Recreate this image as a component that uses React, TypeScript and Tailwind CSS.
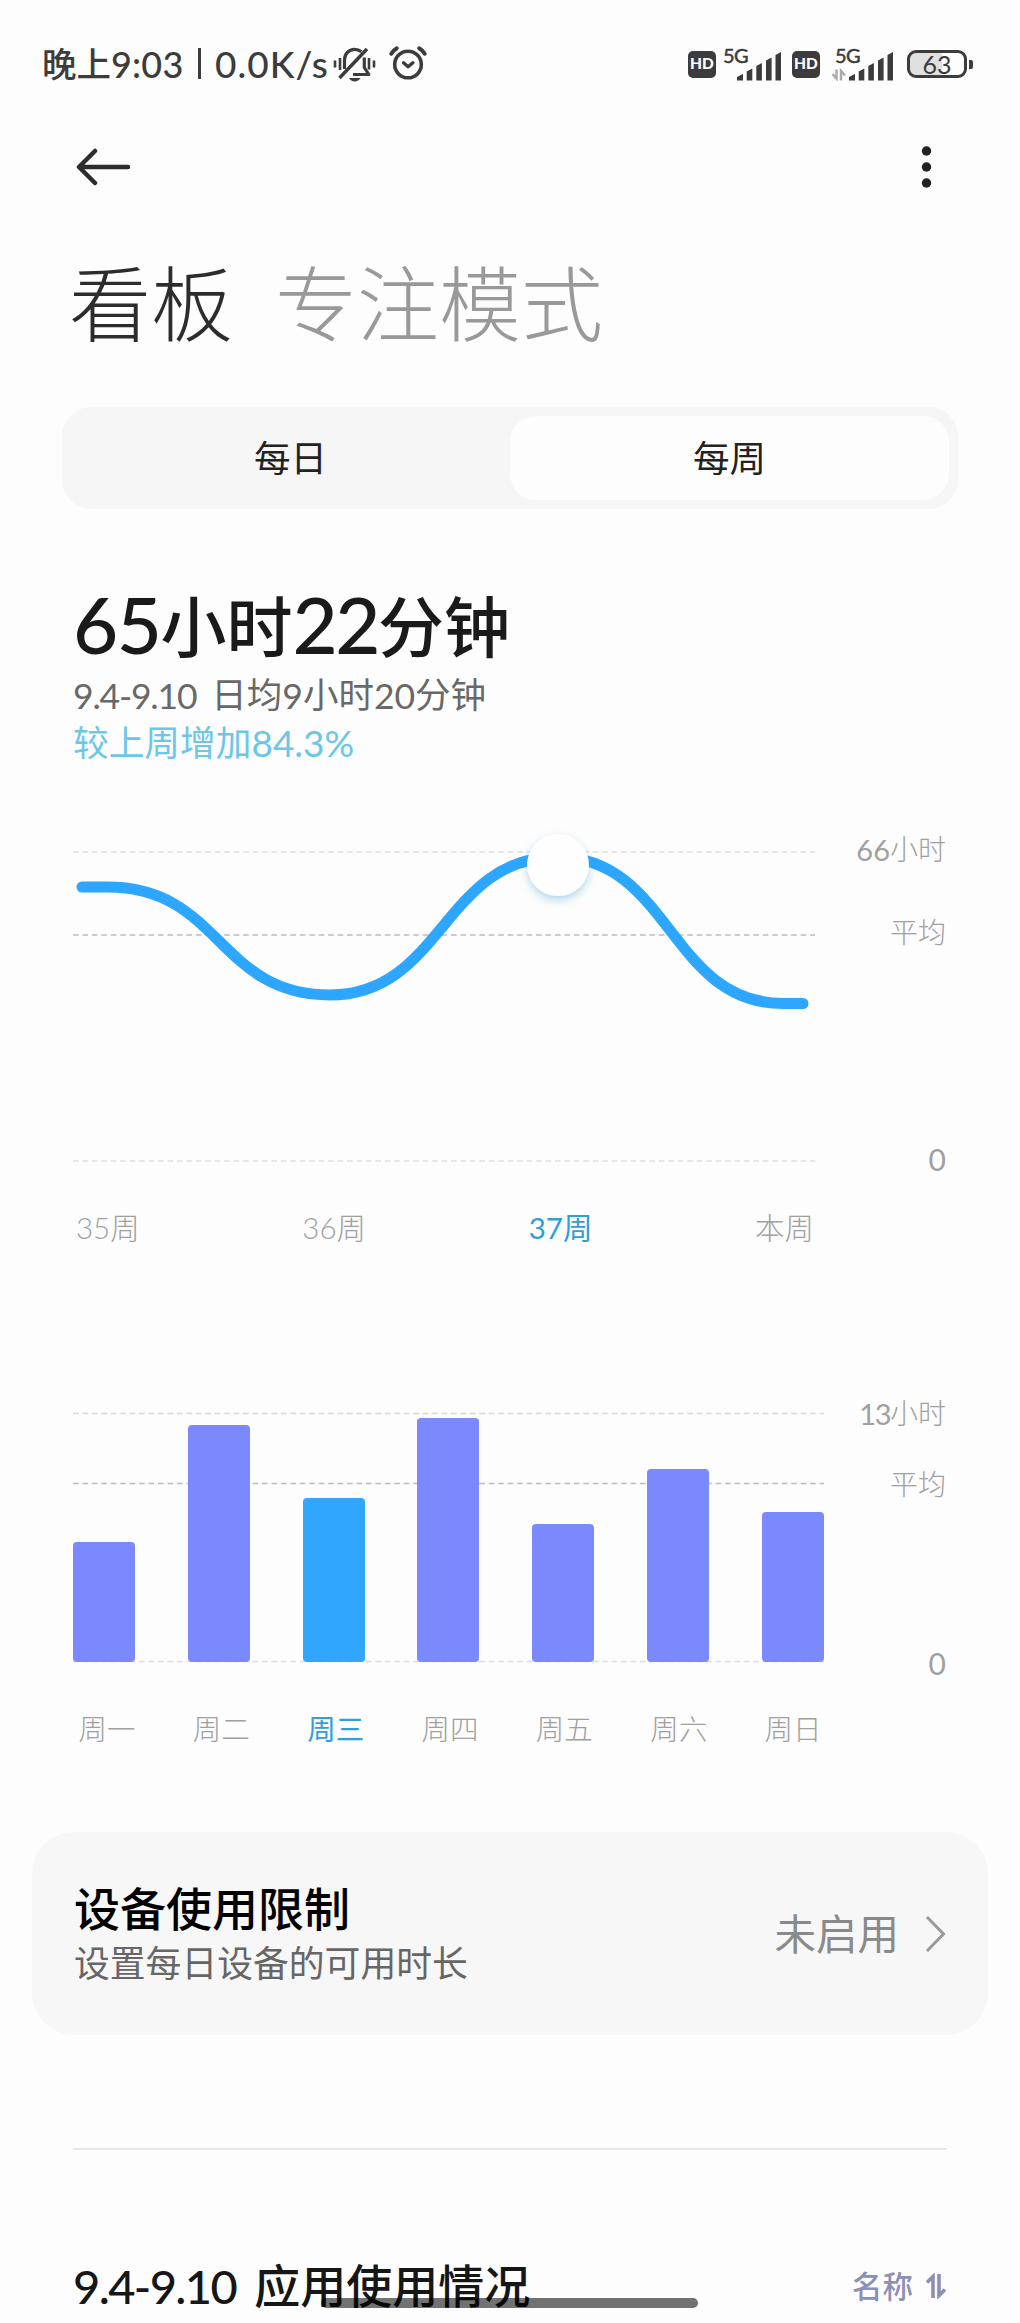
import { ReactNode } from 'react';

const WEEKS = [
  { label: '35周', active: false },
  { label: '36周', active: false },
  { label: '37周', active: true },
  { label: '本周', active: false },
];

const DAYS = [
  { label: '周一', height: 120, active: false },
  { label: '周二', height: 237, active: false },
  { label: '周三', height: 164, active: true },
  { label: '周四', height: 244, active: false },
  { label: '周五', height: 138, active: false },
  { label: '周六', height: 193, active: false },
  { label: '周日', height: 150, active: false },
];

function Num({ children, className = '' }: { children: ReactNode; className?: string }) {
  return <span className={`align-[-0.03em] ${className}`}>{children}</span>;
}

function GridLine({ y, width, color }: { y: number; width: number; color: string }) {
  return (
    <line x1="0" x2={width} y1={y} y2={y} stroke={color} strokeWidth="1.6" strokeDasharray="5.6 3.85" />
  );
}

function MutedBellIcon() {
  return (
    <svg width="44" height="38" viewBox="0 0 44 38" fill="none" stroke="#3c3c3c" strokeWidth="3.200">
      <path d="M11.500 24V15C11.500 9 15.800 4.300 21.500 4.300c2.800 0 5 .9 6.800 2.500" />
      <path d="M31.300 12.500V22.500l4.500 7H20" strokeLinejoin="round" />
      <path d="M34 4 6.500 33" strokeWidth="3.400" />
      <path d="M16 33h11.500c-1.300 2.300-3.300 3.400-5.800 3.400s-4.500-1.100-5.700-3.400Z" fill="#3c3c3c" stroke="none" />
      <path d="M2 15.500v7M7 13v12M36 13v11.500M41 15.500v7" strokeWidth="2.600" />
    </svg>
  );
}

function AlarmIcon() {
  return (
    <svg
      width="40"
      height="36"
      viewBox="0 0 40 36"
      fill="none"
      stroke="#3c3c3c"
      strokeLinecap="round"
      strokeLinejoin="round"
    >
      <circle cx="20" cy="19.500" r="13.300" strokeWidth="3.600" />
      <path d="m15.500 17.800 4.600 4 4.800-4" strokeWidth="3.400" />
      <path d="M3.300 8.700c1.400-2.300 3-3.900 5.500-5.400M36.700 8.700c-1.400-2.300-3-3.900-5.500-5.400" strokeWidth="4" />
    </svg>
  );
}

function HdBadge() {
  return (
    <span className="flex h-[27px] w-7 items-center justify-center rounded-[5px] bg-[#3c3c3c] text-[15.500px] font-black text-white">
      HD
    </span>
  );
}

function Signal({ data = false }: { data?: boolean }) {
  return (
    <svg width="61" height="36" viewBox="0 -2 61 36" fill="#3c3c3c" className="overflow-visible">
      <text x="0" y="15" fontSize="20" letterSpacing="-0.700" stroke="#3c3c3c" strokeWidth="0.500">
        5G
      </text>
      <path d="M14 29 20 26V32.500H14ZM23.700 23.500 29.300 20.500V32.500H23.700ZM33.300 18 38.900 15V32.500H33.300ZM43 12.500 48.600 9.500V32.500H43ZM52.500 7 58 4V32.500H52.500Z" />
      {data && (
        <path d="M1.500 21.500v9l-4-4.500M6 32.500v-9.500l4 4.500" fill="none" stroke="#aaa" strokeWidth="2.400" />
      )}
    </svg>
  );
}

function StatusBar() {
  return (
    <div className="flex h-[128px] items-center pl-[42px] pr-[47px] text-[34.500px] text-[#3c3c3c]">
      <div className="flex items-center whitespace-nowrap font-medium leading-[40px]">
        <span>
          晚上<Num className="text-[36px] tracking-[0.200px]">9:03</Num>
        </span>
        <span className="ml-[14px] mr-[14px] h-[31px] w-[3.500px] bg-[#3c3c3c]" />
        <Num className="w-[118px] text-[37px] tracking-[1px]">0.0K/s</Num>
      </div>
      <MutedBellIcon />
      <div className="ml-[11px] mt-[-2px]">
        <AlarmIcon />
      </div>
      <div className="ml-auto flex items-center">
        <HdBadge />
        <div className="ml-[7px]">
          <Signal />
        </div>
        <div className="ml-[8px]">
          <HdBadge />
        </div>
        <div className="ml-[15px]">
          <Signal data />
        </div>
        <div className="ml-[11px] flex h-[28px] w-[60px] items-center justify-center rounded-[9px] border-[3px] border-[#3c3c3c] bg-[linear-gradient(90deg,#e0e0e0_60%,#fdfdfd_60%)] text-[25px] leading-none">
          63
        </div>
        <span className="ml-[2px] h-[9px] w-[4px] rounded-r-[2px] bg-[#3c3c3c]" />
      </div>
    </div>
  );
}

function Header() {
  return (
    <>
      <div className="flex h-[78px] items-center justify-between pl-[76px] pr-[88px]">
        <svg
          width="55"
          height="38"
          viewBox="0 0 55 38"
          fill="none"
          stroke="#2c2c2c"
          strokeWidth="4.500"
          strokeLinecap="round"
          strokeLinejoin="round"
        >
          <path d="M19 3 3 19l16 16M4 19h48" />
        </svg>
        <svg width="11" height="44" viewBox="0 0 11 44" fill="#222">
          <circle cx="5.500" cy="6" r="4.700" />
          <circle cx="5.500" cy="22" r="4.700" />
          <circle cx="5.500" cy="38" r="4.700" />
        </svg>
      </div>
      <div className="mt-[47px] flex h-[101px] gap-[42px] pl-[69px] text-[82px] font-light leading-[100px]">
        <h1 className="text-[#2c2c2c]">看板</h1>
        <span className="text-[#999]">专注模式</span>
      </div>
    </>
  );
}

function PeriodTabs() {
  return (
    <div className="mx-[62px] mt-[53px] grid h-[102px] grid-cols-2 rounded-[29px] bg-[#f6f6f6] p-[9px] text-center text-[36.500px] leading-[84px] text-[#222]">
      <button>每日</button>
      <button className="rounded-[26px] bg-[#fdfdfd]">每周</button>
    </div>
  );
}

function Summary() {
  return (
    <div className="ml-[73px] whitespace-nowrap">
      <div className="mt-[69px] h-[92px] text-[66px] font-medium leading-[92px] text-[#1a1a1a]">
        <Num className="text-[78px] tracking-[-1.500px]">65</Num>小时
        <Num className="text-[78px] tracking-[-2.500px]">22</Num>分钟
      </div>
      <div className="h-[49px] text-[35.500px] leading-[49px] text-[#686868]">
        <Num className="mr-[15px] tracking-[-1.200px]">9.4-9.10</Num>日均<Num>9</Num>小时<Num>20</Num>分钟
      </div>
      <div className="h-[49px] text-[35.700px] leading-[48px] text-[#6cc6ea]">
        较上周增加<Num className="text-[37px]">84.3%</Num>
      </div>
    </div>
  );
}

function TrendChart() {
  return (
    <div className="ml-[73px] mr-[74px] mt-[61px]">
      <div className="flex h-[360px] justify-between">
        <svg width="742" height="360" className="overflow-visible">
          <defs>
            <filter id="knob" x="-50%" y="-50%" width="200%" height="200%">
              <feDropShadow dx="0" dy="4" stdDeviation="4" floodColor="#2b8fc8" floodOpacity="0.350" />
            </filter>
          </defs>
          <GridLine y={23} width={742} color="#dedede" />
          <GridLine y={106} width={742} color="#bcbcbc" />
          <GridLine y={332} width={742} color="#dedede" />
          <path
            d="M9 58H35C147 58 145 166 257 166S371 28 484 28S597 174.500 710 174.500H730"
            fill="none"
            stroke="#2ca6fe"
            strokeWidth="11"
            strokeLinecap="round"
          />
          <circle cx="485" cy="36" r="31" fill="#fefefe" filter="url(#knob)" />
        </svg>
        <div className="text-right text-[28px] font-light leading-[40px] text-[#a0a0a0]">
          <p>
            <Num className="text-[29px] font-normal">66</Num>小时
          </p>
          <p className="mt-[42px]">平均</p>
          <p className="mt-[187px]">
            <Num className="text-[30px] font-normal">0</Num>
          </p>
        </div>
      </div>
      <div className="mt-[18px] flex w-[742px] justify-between pl-[3px] pr-px text-[29.500px] font-light leading-[42px] text-[#a0a0a0]">
        {WEEKS.map(({ label, active }) => (
          <span key={label} className={active ? 'font-normal text-[#309fd6]' : ''}>
            {label}
          </span>
        ))}
      </div>
    </div>
  );
}

function DailyChart() {
  return (
    <div className="ml-[73px] mr-[74px] mt-[144px]">
      <div className="flex h-[289px] justify-between">
        <div className="relative flex h-[268.500px] w-[751px] items-end justify-between">
          <svg width="751" height="270" className="absolute left-0 top-0">
            <GridLine y={20.5} width={751} color="#d6d6d6" />
            <GridLine y={90.5} width={751} color="#bcbcbc" />
            <GridLine y={268.5} width={751} color="#dedede" />
          </svg>
          {DAYS.map(({ label, height, active }) => (
            <div
              key={label}
              className={`relative w-[62px] rounded-[4px] ${active ? 'bg-[#30a6ff]' : 'bg-[#7b89ff]'}`}
              style={{ height }}
            />
          ))}
        </div>
        <div className="text-right text-[28px] font-light leading-[40px] text-[#a0a0a0]">
          <p>
            <Num className="text-[29px] font-normal tracking-[-1.500px]">13</Num>小时
          </p>
          <p className="mt-[30px]">平均</p>
          <p className="mt-[139px]">
            <Num className="text-[30px] font-normal">0</Num>
          </p>
        </div>
      </div>
      <div className="mt-[26px] flex w-[751px] justify-between pl-[3px] text-[28.500px] font-light leading-[42px] text-[#a0a0a0]">
        {DAYS.map(({ label, active }) => (
          <span key={label} className={`w-[62px] text-center ${active ? 'font-normal text-[#309fe0]' : ''}`}>
            {label}
          </span>
        ))}
      </div>
    </div>
  );
}

function LimitCard() {
  return (
    <div className="mx-[32px] mt-[82px] flex h-[203px] items-center justify-between rounded-[42px] bg-[#f7f7f7] pl-[42px] pr-[42px]">
      <div>
        <h2 className="text-[46px] font-medium leading-[60px] text-black">设备使用限制</h2>
        <p className="text-[35.800px] leading-[50px] text-[#666]">设置每日设备的可用时长</p>
      </div>
      <div className="flex items-center gap-[25px] text-[41.500px] leading-[50px] text-[#8a8a8a]">
        未启用
        <svg width="22" height="38" viewBox="0 0 22 38" fill="none" stroke="#999" strokeWidth="3">
          <path d="m3 2 16.500 17L3 36" />
        </svg>
      </div>
    </div>
  );
}

function UsageHeading() {
  return (
    <div className="mx-[73px] mt-[113px] border-t-2 border-[#e8e8e8]">
      <div className="mt-[106px] flex h-[60px] items-center justify-between whitespace-nowrap">
        <h2 className="text-[46px] font-medium leading-[60px] text-[#161616]">
          <Num className="mr-[18px] text-[47px] tracking-[-1.600px]">9.4-9.10</Num>应用使用情况
        </h2>
        <div className="flex items-center gap-[12px] text-[30.500px] font-medium leading-[60px] text-[#8b90b4]">
          名称
          <svg width="22" height="26" viewBox="0 0 22 26" fill="none" stroke="#8b90b4" strokeWidth="3.600">
            <path d="M2 9.500 8 3.500V25M14 1v21.500l6-6" />
          </svg>
        </div>
      </div>
    </div>
  );
}

export default function App() {
  return (
    <div className="relative h-[2323px] w-[1020px] overflow-hidden bg-[#fdfdfd] font-['Lato','Noto_Sans_CJK_SC',sans-serif]">
      <StatusBar />
      <Header />
      <PeriodTabs />
      <Summary />
      <TrendChart />
      <DailyChart />
      <LimitCard />
      <UsageHeading />
      <div className="absolute left-[321px] top-[2298px] h-[10px] w-[377px] rounded-full bg-black/55" />
    </div>
  );
}
